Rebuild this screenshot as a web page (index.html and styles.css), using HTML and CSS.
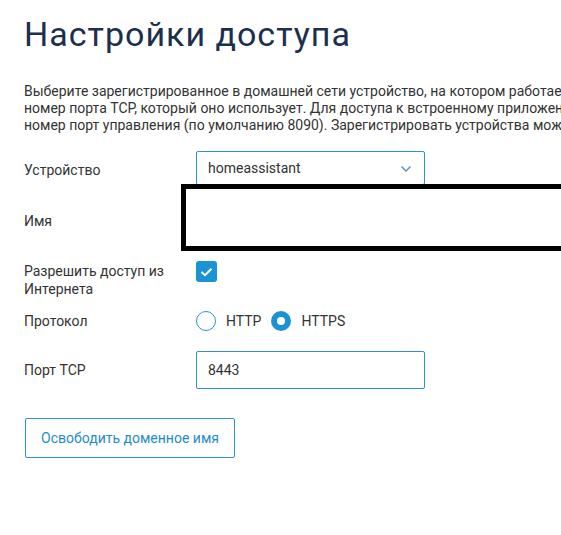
FILE: index.html
```html
<!DOCTYPE html>
<html lang="ru">
<head>
    <meta charset="UTF-8">
    <meta name="viewport" content="width=device-width, initial-scale=1.0">
    <title>Настройки доступа</title>
    <link rel="stylesheet" href="styles.css">
</head>
<body>

<div class="page">
    <h1 class="title">Настройки доступа</h1>

    <p class="intro">
        Выберите зарегистрированное в домашней сети устройство, на котором работает веб-приложение, и укажите<br>
        номер порта TCP, который оно использует. Для доступа к встроенному приложению интернет-центра укажите<br>
        номер порт управления (по умолчанию 8090). Зарегистрировать устройства можно на странице «Список устройств».
    </p>

    <!-- Device -->
    <div class="row row-device">
        <div class="label">Устройство</div>
        <div class="select">
            <span>homeassistant</span>
            <svg class="chevron" width="12" height="8" viewBox="0 0 12 8">
                <path d="M1.5 1.5 L6 6 L10.5 1.5" fill="none" stroke="#5b8fbd" stroke-width="1.4"/>
            </svg>
        </div>
    </div>

    <!-- Name (hidden) -->
    <div class="row row-name">
        <div class="label">Имя</div>
        <input class="input" type="text">
        <div class="redact"></div>
    </div>

    <!-- Internet access -->
    <div class="row row-check">
        <div class="label">Разрешить доступ из<br>Интернета</div>
        <span class="checkbox">
            <svg width="13" height="10" viewBox="0 0 13 10">
                <path d="M1.5 5 L5 8.2 L11.5 1.8" fill="none" stroke="#fff" stroke-width="2"/>
            </svg>
        </span>
    </div>

    <!-- Protocol -->
    <div class="row row-proto">
        <div class="label">Протокол</div>
        <div class="radios">
            <span class="radio"></span>
            <span class="radio-text">HTTP</span>
            <span class="radio checked"></span>
            <span class="radio-text">HTTPS</span>
        </div>
    </div>

    <!-- Port -->
    <div class="row row-port">
        <div class="label">Порт TCP</div>
        <div class="input">8443</div>
    </div>

    <button class="btn">Освободить доменное имя</button>
</div>

</body>
</html>
```

FILE: styles.css
```css
html, body {
    overflow: hidden;
}

body {
    margin: 0;
    background: #fff;
    font-family: Roboto, 'Noto Sans', Arial, sans-serif;
    color: #333;
}

.page {
    padding: 12px 0 0 24px;
}

.title {
    margin: 0;
    font-size: 34px;
    font-weight: 400;
    letter-spacing: 1px;
    color: #1c2f4e;
    line-height: 44px;
}

.intro {
    margin: 27px 0 0 0;
    font-size: 14px;
    line-height: 17px;
    white-space: nowrap;
    color: #333;
}

.row {
    display: flex;
    align-items: center;
    position: relative;
}

.label {
    width: 172px;
    flex-shrink: 0;
    font-size: 14px;
    line-height: 18px;
    color: #333;
}

.row-device {
    margin-top: 17px;
    height: 34px;
}

.row-device .label {
    padding-top: 4px;
}

.select {
    width: 229px;
    height: 34px;
    box-sizing: border-box;
    border: 1px solid #2b94cf;
    border-radius: 2px;
    display: flex;
    align-items: center;
    justify-content: space-between;
    padding: 0 12px 0 11px;
    font-size: 14px;
    color: #333;
}

.chevron {
    margin-top: 2px;
}

.row-name {
    height: 66px;
}

.row-name .label {
    padding-top: 6px;
}

.input {
    width: 229px;
    height: 38px;
    box-sizing: border-box;
    border: 1px solid #2b94cf;
    border-radius: 2px;
    padding: 0 11px;
    font-family: inherit;
    font-size: 14px;
    line-height: 36px;
    color: #333;
}

/* redaction box over the name field */
.redact {
    position: absolute;
    left: 157px;
    top: -1px;
    width: 385px;
    height: 67px;
    box-sizing: border-box;
    border: 5px solid #000;
    background: #fff;
}

.row-check {
    margin-top: 10px;
    align-items: flex-start;
}

.row-check .label {
    margin-top: 1px;
}

.checkbox {
    width: 21px;
    height: 21px;
    border-radius: 3px;
    background: #1a93d5;
    display: flex;
    align-items: center;
    justify-content: center;
}

.row-proto {
    margin-top: 13px;
    height: 20px;
}

.radios {
    display: flex;
    align-items: center;
}

.radio {
    width: 20px;
    height: 20px;
    box-sizing: border-box;
    border: 1.5px solid #2b94cf;
    border-radius: 50%;
}

.radio.checked {
    border: 6px solid #1a93d5;
    background: #fff;
}

.radio-text {
    margin: 0 10px 0 10px;
    font-size: 14px;
    color: #333;
}

.row-port {
    margin-top: 20px;
}

.btn {
    margin-top: 29px;
    margin-left: 1px;
    width: 210px;
    height: 40px;
    background: #fff;
    border: 1px solid #2b94cf;
    border-radius: 2px;
    font-family: inherit;
    font-size: 14px;
    color: #1e8ccb;
    cursor: pointer;
}
```
